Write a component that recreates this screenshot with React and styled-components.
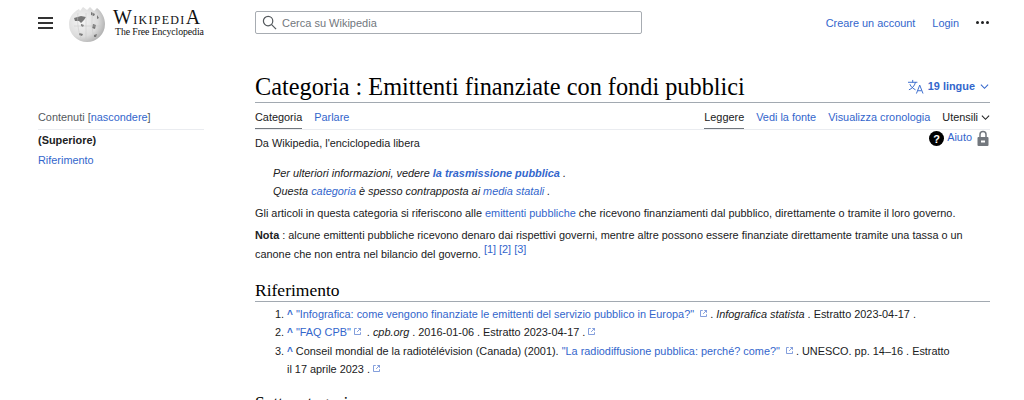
import React from "react";
import styled, { createGlobalStyle } from "styled-components";

const GlobalStyle = createGlobalStyle`
  html, body {
    margin: 0;
    padding: 0;
    height: 400px;
    overflow: hidden;
    background: #fff;
  }
  body {
    font-family: "Liberation Sans", Arial, sans-serif;
    color: #202122;
    font-size: 10.9px;
  }
`;

const Page = styled.div`
  width: 1024px;
  height: 400px;
  overflow: hidden;
`;

const Header = styled.header`
  height: 45px;
  display: flex;
  align-items: center;
  padding: 0 35px 0 38px;
`;

const Menu = styled.div`
  width: 15px;
  display: flex;
  flex-direction: column;
  gap: 3px;
  margin-right: 15px;
  span {
    height: 2px;
    background: #333;
  }
`;

const Globe = styled.svg`
  width: 38px;
  height: 38px;
  margin-right: 7px;
`;

const Wordmark = styled.div`
  width: 97px;
  font-family: "Liberation Serif", serif;
  color: #111;
  margin-right: 45px;
`;

const WordTitle = styled.div`
  font-size: 17px;
  line-height: 17px;
  font-variant: small-caps;
  letter-spacing: 1.3px;
  white-space: nowrap;
`;

const BigLetter = styled.span`
  font-size: 20px;
`;

const WordSub = styled.div`
  font-size: 9.800px;
  line-height: 10px;
  padding-left: 2px;
  letter-spacing: -0.1px;
  white-space: nowrap;
`;

const Search = styled.div`
  width: 387px;
  height: 23px;
  box-sizing: border-box;
  border: 1px solid #a7acb2;
  border-radius: 2px;
  display: flex;
  align-items: center;
  gap: 5px;
  padding-left: 6px;
  color: #72777d;
  font-size: 11px;
`;

const UserLinks = styled.nav`
  margin-left: auto;
  display: flex;
  align-items: center;
  gap: 17px;
`;

const A = styled.a`
  color: #3366cc;
  font-weight: ${(p) => (p.$bold ? 700 : 400)};
`;

const Dots = styled.div`
  display: flex;
  gap: 2px;
  i {
    width: 3px;
    height: 3px;
    border-radius: 50%;
    background: #202122;
  }
`;

const Body = styled.div`
  display: flex;
  padding: 0 34px 0 38px;
`;

const Sidebar = styled.aside`
  width: 166px;
  margin-right: 51px;
  padding-top: 65px;
`;

const TocHead = styled.div`
  color: #54595d;
  line-height: 15px;
  padding-bottom: 4px;
  border-bottom: 1px solid #eaecf0;
`;

const TocItem = styled.div`
  line-height: 20px;
  font-weight: ${(p) => (p.$bold ? 700 : 400)};
  color: ${(p) => (p.$bold ? "#202122" : "#3366cc")};
`;

const Main = styled.main`
  flex: 1;
  padding-top: 25px;
`;

const TitleRow = styled.div`
  display: flex;
  align-items: center;
  justify-content: space-between;
  height: 32px;
  border-bottom: 1px solid #a2a9b1;
`;

const Title = styled.h1`
  margin: 2px 0 0;
  font-family: "Liberation Serif", serif;
  font-weight: 400;
  font-size: 24.300px;
  color: #000;
`;

const Lang = styled.div`
  display: flex;
  align-items: center;
  gap: 4px;
  padding-right: 1px;
  color: #3366cc;
  font-weight: 700;
`;

const LangLabel = styled.span`
  margin-right: 1px;
`;

const Tabs = styled.div`
  display: flex;
  justify-content: space-between;
  height: 26px;
  border-bottom: 1px solid #eaecf0;
`;

const TabGroup = styled.div`
  display: flex;
  gap: 12px;
`;

const Tab = styled.div`
  height: 26px;
  box-sizing: border-box;
  padding-top: 2px;
  color: ${(p) => (p.$active || p.$plain ? "#202122" : "#3366cc")};
  border-bottom: ${(p) => (p.$active ? "1px solid #72777d" : "none")};
  display: flex;
  align-items: center;
  gap: 3px;
`;

const Help = styled.div`
  height: 0;
  display: flex;
  justify-content: flex-end;
  align-items: flex-start;
  gap: 3px;
  color: #3366cc;
  padding-right: 1px;
`;

const HelpLabel = styled.span`
  line-height: 15px;
  margin-right: 2px;
`;

const Sub = styled.p`
  margin: 5px 0 13px;
  line-height: 16px;
`;

const Hatnote = styled.div`
  font-style: italic;
  padding-left: 18px;
  line-height: 18px;
  margin-bottom: 4px;
`;

const Para = styled.p`
  margin: 0 0 3px;
  line-height: 19px;
`;

const Sup = styled.sup`
  color: #3366cc;
  font-size: 10.9px;
  line-height: 0;
`;

const H2 = styled.h2`
  margin: 15px 0 3px;
  font-family: "Liberation Serif", serif;
  font-weight: 400;
  font-size: 17.500px;
  line-height: 22px;
  color: #000;
  border-bottom: 1px solid #a2a9b1;
`;

const Refs = styled.ol`
  margin: 1px 0 -2px;
  padding-left: 32px;
  li {
    line-height: 18.300px;
  }
`;

const Caret = styled.b`
  color: #3366cc;
  font-size: 10px;
  line-height: 1;
`;

const NoWrap = styled.span`
  white-space: nowrap;
`;

const ExtIcon = styled.svg`
  width: 9px;
  height: 9px;
  margin: 0 2px;
`;

const HelpIcon = styled.svg`
  margin-top: 1px;
`;

const Ext = () => (
  <ExtIcon viewBox="0 0 12 12">
    <path d="M5 2H2v8h8V7M7 2h3v3M10 2 5.5 6.5" fill="none" stroke="#5b7fd0" strokeWidth="1" />
  </ExtIcon>
);

const Chevron = ({ color = "#202122" }) => (
  <svg width="9" height="9" viewBox="0 0 10 10">
    <path d="M1 3l4 4 4-4" fill="none" stroke={color} strokeWidth="1.200" />
  </svg>
);

export default function App() {
  return (
    <Page>
      <GlobalStyle />
      <Header>
        <Menu>
          <span />
          <span />
          <span />
        </Menu>
        <Globe viewBox="0 0 38 38">
          <defs>
            <radialGradient id="g" cx="35%" cy="40%" r="75%">
              <stop offset="0" stopColor="#f6f6f6" />
              <stop offset="0.6" stopColor="#dcdcdc" />
              <stop offset="1" stopColor="#a4a4a4" />
            </radialGradient>
          </defs>
          <path d="M11 5C4 9 1 14 1 20a18 18 0 0 0 36 0c0-6-3-12-8-16l-3 3-4-4-3 3-4-3-3 4z" fill="url(#g)" />
          <path d="M6 14l7-2 5 1-2 3-3 3-2-2-4 0zM23 8l4 2-1 2-3-1zM29 11l2 3-2 1zM13 20l3 1-1 2-2-1zM25 20l3 1-1 4-3-1zM11 29l4 1-1 2-3-1zM26 31l3-1-1 3-2 0z" fill="#777" />
          <path d="M18 9v26M6 22h27M25 8c-2 8-1 18 1 26M10 9c-1 8 0 18 3 25" fill="none" stroke="#c4c4c4" strokeWidth="0.500" />
        </Globe>
        <Wordmark>
          <WordTitle>
            <BigLetter>W</BigLetter>ikipedi<BigLetter>A</BigLetter>
          </WordTitle>
          <WordSub>The Free Encyclopedia</WordSub>
        </Wordmark>
        <Search>
          <svg width="15" height="15" viewBox="0 0 16 16">
            <circle cx="6.500" cy="6.500" r="5" fill="none" stroke="#54595d" strokeWidth="1.300" />
            <path d="M10 10l5 5" stroke="#54595d" strokeWidth="1.300" />
          </svg>
          Cerca su Wikipedia
        </Search>
        <UserLinks>
          <A>Creare un account</A>
          <A>Login</A>
          <Dots>
            <i />
            <i />
            <i />
          </Dots>
        </UserLinks>
      </Header>
      <Body>
        <Sidebar>
          <TocHead>
            Contenuti [<A>nascondere</A>]
          </TocHead>
          <TocItem $bold>(Superiore)</TocItem>
          <TocItem>Riferimento</TocItem>
        </Sidebar>
        <Main>
          <TitleRow>
            <Title>Categoria : Emittenti finanziate con fondi pubblici</Title>
            <Lang>
              <svg width="17" height="15" viewBox="0 0 18 16">
                <path d="M1 3.500h10M6 1v2.500M9 3.500c-1 4-4 7-7 8M3 5.500c1 3 4 5 6 6M10 15.500l3.500-9 3.500 9M11.500 12.500h4" fill="none" stroke="#3366cc" strokeWidth="1" />
              </svg>
              <LangLabel>19 lingue</LangLabel>
              <Chevron color="#3366cc" />
            </Lang>
          </TitleRow>
          <Tabs>
            <TabGroup>
              <Tab $active>Categoria</Tab>
              <Tab>Parlare</Tab>
            </TabGroup>
            <TabGroup>
              <Tab $active>Leggere</Tab>
              <Tab>Vedi la fonte</Tab>
              <Tab>Visualizza cronologia</Tab>
              <Tab $plain>
                Utensili
                <Chevron />
              </Tab>
            </TabGroup>
          </Tabs>
          <Help>
            <HelpIcon width="15" height="15" viewBox="0 0 15 15">
              <circle cx="7.500" cy="7.500" r="7.500" fill="#000" />
              <text x="7.500" y="11.500" textAnchor="middle" fill="#fff" fontSize="11" fontWeight="700" fontFamily="Liberation Sans">?</text>
            </HelpIcon>
            <HelpLabel>Aiuto</HelpLabel>
            <svg width="12" height="16" viewBox="0 0 12 16">
              <path d="M3 7V4.500a3 3 0 0 1 6 0V7" fill="none" stroke="#72777d" strokeWidth="1.500" />
              <rect x="0.500" y="7" width="11" height="9" rx="1" fill="#72777d" />
              <rect x="4" y="10.500" width="4" height="2" fill="#fff" />
            </svg>
          </Help>
          <Sub>Da Wikipedia, l'enciclopedia libera</Sub>
          <Hatnote>
            Per ulteriori informazioni, vedere <A $bold>la trasmissione pubblica</A> .
            <br />
            Questa <A>categoria</A> è spesso contrapposta ai <A>media statali</A> .
          </Hatnote>
          <Para>
            Gli articoli in questa categoria si riferiscono alle <A>emittenti pubbliche</A> che ricevono finanziamenti dal pubblico, direttamente o tramite il loro governo.
          </Para>
          <Para>
            <b>Nota</b> : alcune emittenti pubbliche ricevono denaro dai rispettivi governi, mentre altre possono essere finanziate direttamente tramite una tassa o un canone che non entra nel bilancio del governo. <Sup>[1] [2] [3]</Sup>
          </Para>
          <H2>Riferimento</H2>
          <Refs>
            <li>
              <Caret>^</Caret> <A>"Infografica: come vengono finanziate le emittenti del servizio pubblico in Europa?"</A> <Ext />. <i>Infografica statista</i> . Estratto 2023-04-17 .
            </li>
            <li>
              <Caret>^</Caret> <A>"FAQ CPB"</A><Ext /> . <i>cpb.org</i> . 2016-01-06 . Estratto 2023-04-17 .<Ext />
            </li>
            <li>
              <Caret>^</Caret> Conseil mondial de la radiotélévision (Canada) (2001). <A>"La radiodiffusione pubblica: perché? come?"</A> <Ext />. UNESCO. pp. 14–16 . Estratto <NoWrap>il 17 aprile 2023</NoWrap> .<Ext />
            </li>
          </Refs>
          <H2>Sottocategorie</H2>
        </Main>
      </Body>
    </Page>
  );
}
